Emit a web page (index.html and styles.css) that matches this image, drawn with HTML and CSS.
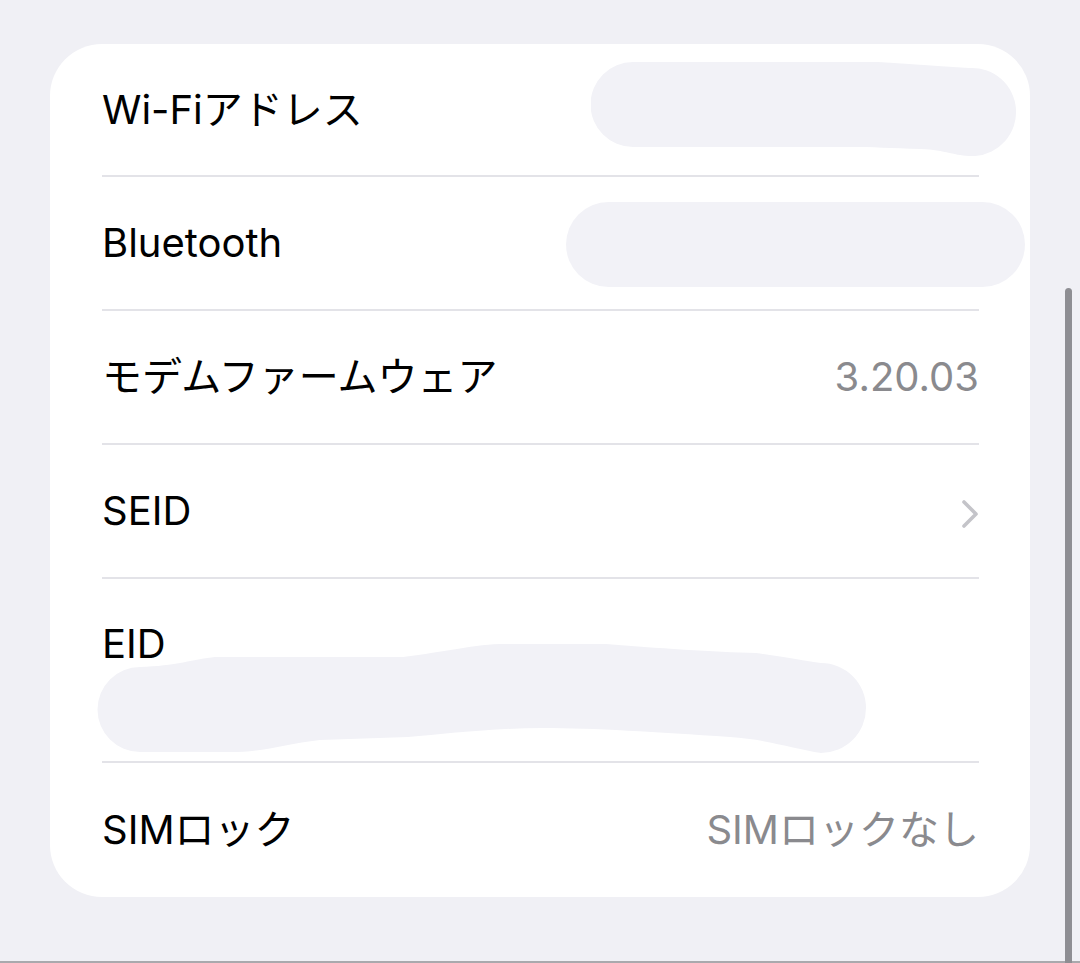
FILE: index.html
```html
<!DOCTYPE html>
<html lang="ja">

<head>
  <meta charset="UTF-8">
  <meta name="viewport" content="width=device-width, initial-scale=1.0">
  <title>情報</title>
  <link rel="stylesheet" href="styles.css">
</head>

<body>
  <div class="card">
    <div class="row">
      <span class="label">Wi-Fiアドレス</span>
      <svg class="blob blob-wifi" width="426" height="95" viewBox="0 0 426 95">
        <path d="M42 0 H287 C320 2 345 4 378 6 A44 44 0 0 1 384 94 C366 95 356 88 330 87 C300 86 280 85 260 85 H42 A42.5 42.5 0 0 1 42 0 Z" />
      </svg>
    </div>
    <div class="row">
      <span class="label">Bluetooth</span>
      <div class="blob blob-bt"></div>
    </div>
    <div class="row">
      <span class="label">モデムファームウェア</span>
      <span class="value">3.20.03</span>
    </div>
    <div class="row">
      <span class="label">SEID</span>
      <svg class="chevron" width="18" height="30" viewBox="0 0 18 30">
        <polyline points="3,3 15,15 3,27" />
      </svg>
    </div>
    <div class="row row-eid">
      <span class="label">EID</span>
      <svg class="blob blob-eid" width="771" height="109" viewBox="0 0 771 109">
        <path d="M45 23 C80 22 100 15 120 13 L308 13 C350 8 380 0 410 0 L511 0 C560 4 620 8 661 9 C690 13 710 17 726 19 A45 45 0 0 1 726 109 C700 105 670 95 635 93 C560 88 500 84 447 84 C400 84 350 90 313 93 L225 96 C190 100 170 108 135 108 L45 108 A42.5 42.5 0 0 1 45 23 Z" />
      </svg>
    </div>
    <div class="row">
      <span class="label">SIMロック</span>
      <span class="value">SIMロックなし</span>
    </div>
  </div>

  <div class="scroll-thumb"></div>
</body>

</html>
```

FILE: styles.css
```css
body {
  margin: 0;
  height: 963px;
  box-sizing: border-box;
  padding: 44px 0 0 50px;
  background: #f0f0f5;
  font-family: 'Inter', 'Noto Sans CJK JP', sans-serif;
  overflow: hidden;
  border-bottom: 2px solid #a9a9ad;
}

.card {
  width: 980px;
  box-sizing: border-box;
  padding: 0 51px 0 52px;
  background: #fff;
  border-radius: 52px;
}

.row {
  display: flex;
  align-items: center;
  justify-content: space-between;
  height: 132px;
  border-bottom: 2px solid #e3e3e8;
}

.row:first-child {
  height: 131px;
}

.row:last-child {
  height: 134px;
  border-bottom: none;
}

.label {
  font-size: 40px;
  line-height: 44px;
  color: #000;
}

.value {
  font-size: 40px;
  line-height: 44px;
  color: #8a8a8e;
}

/* redacted areas */
.blob {
  fill: #f2f2f7;
  flex: none;
}

.blob-wifi {
  margin-right: -38px;
}

.blob-bt {
  width: 459px;
  height: 85px;
  border-radius: 43px;
  background: #f2f2f7;
  margin-right: -46px;
  margin-top: 2px;
}

.chevron {
  fill: none;
  stroke: #c4c4c9;
  stroke-width: 3.6;
  stroke-linecap: round;
  stroke-linejoin: round;
  margin-top: 6px;
}

.row-eid {
  flex-direction: column;
  align-items: flex-start;
  justify-content: flex-start;
  padding-top: 43px;
  box-sizing: border-box;
  height: 184px;
}

.blob-eid {
  margin-top: -22px;
  margin-left: -7px;
}

.scroll-thumb {
  position: absolute;
  left: 1065px;
  top: 288px;
  width: 7px;
  height: 700px;
  border-radius: 4px 4px 0 0;
  background: #8e8e93;
}
```
